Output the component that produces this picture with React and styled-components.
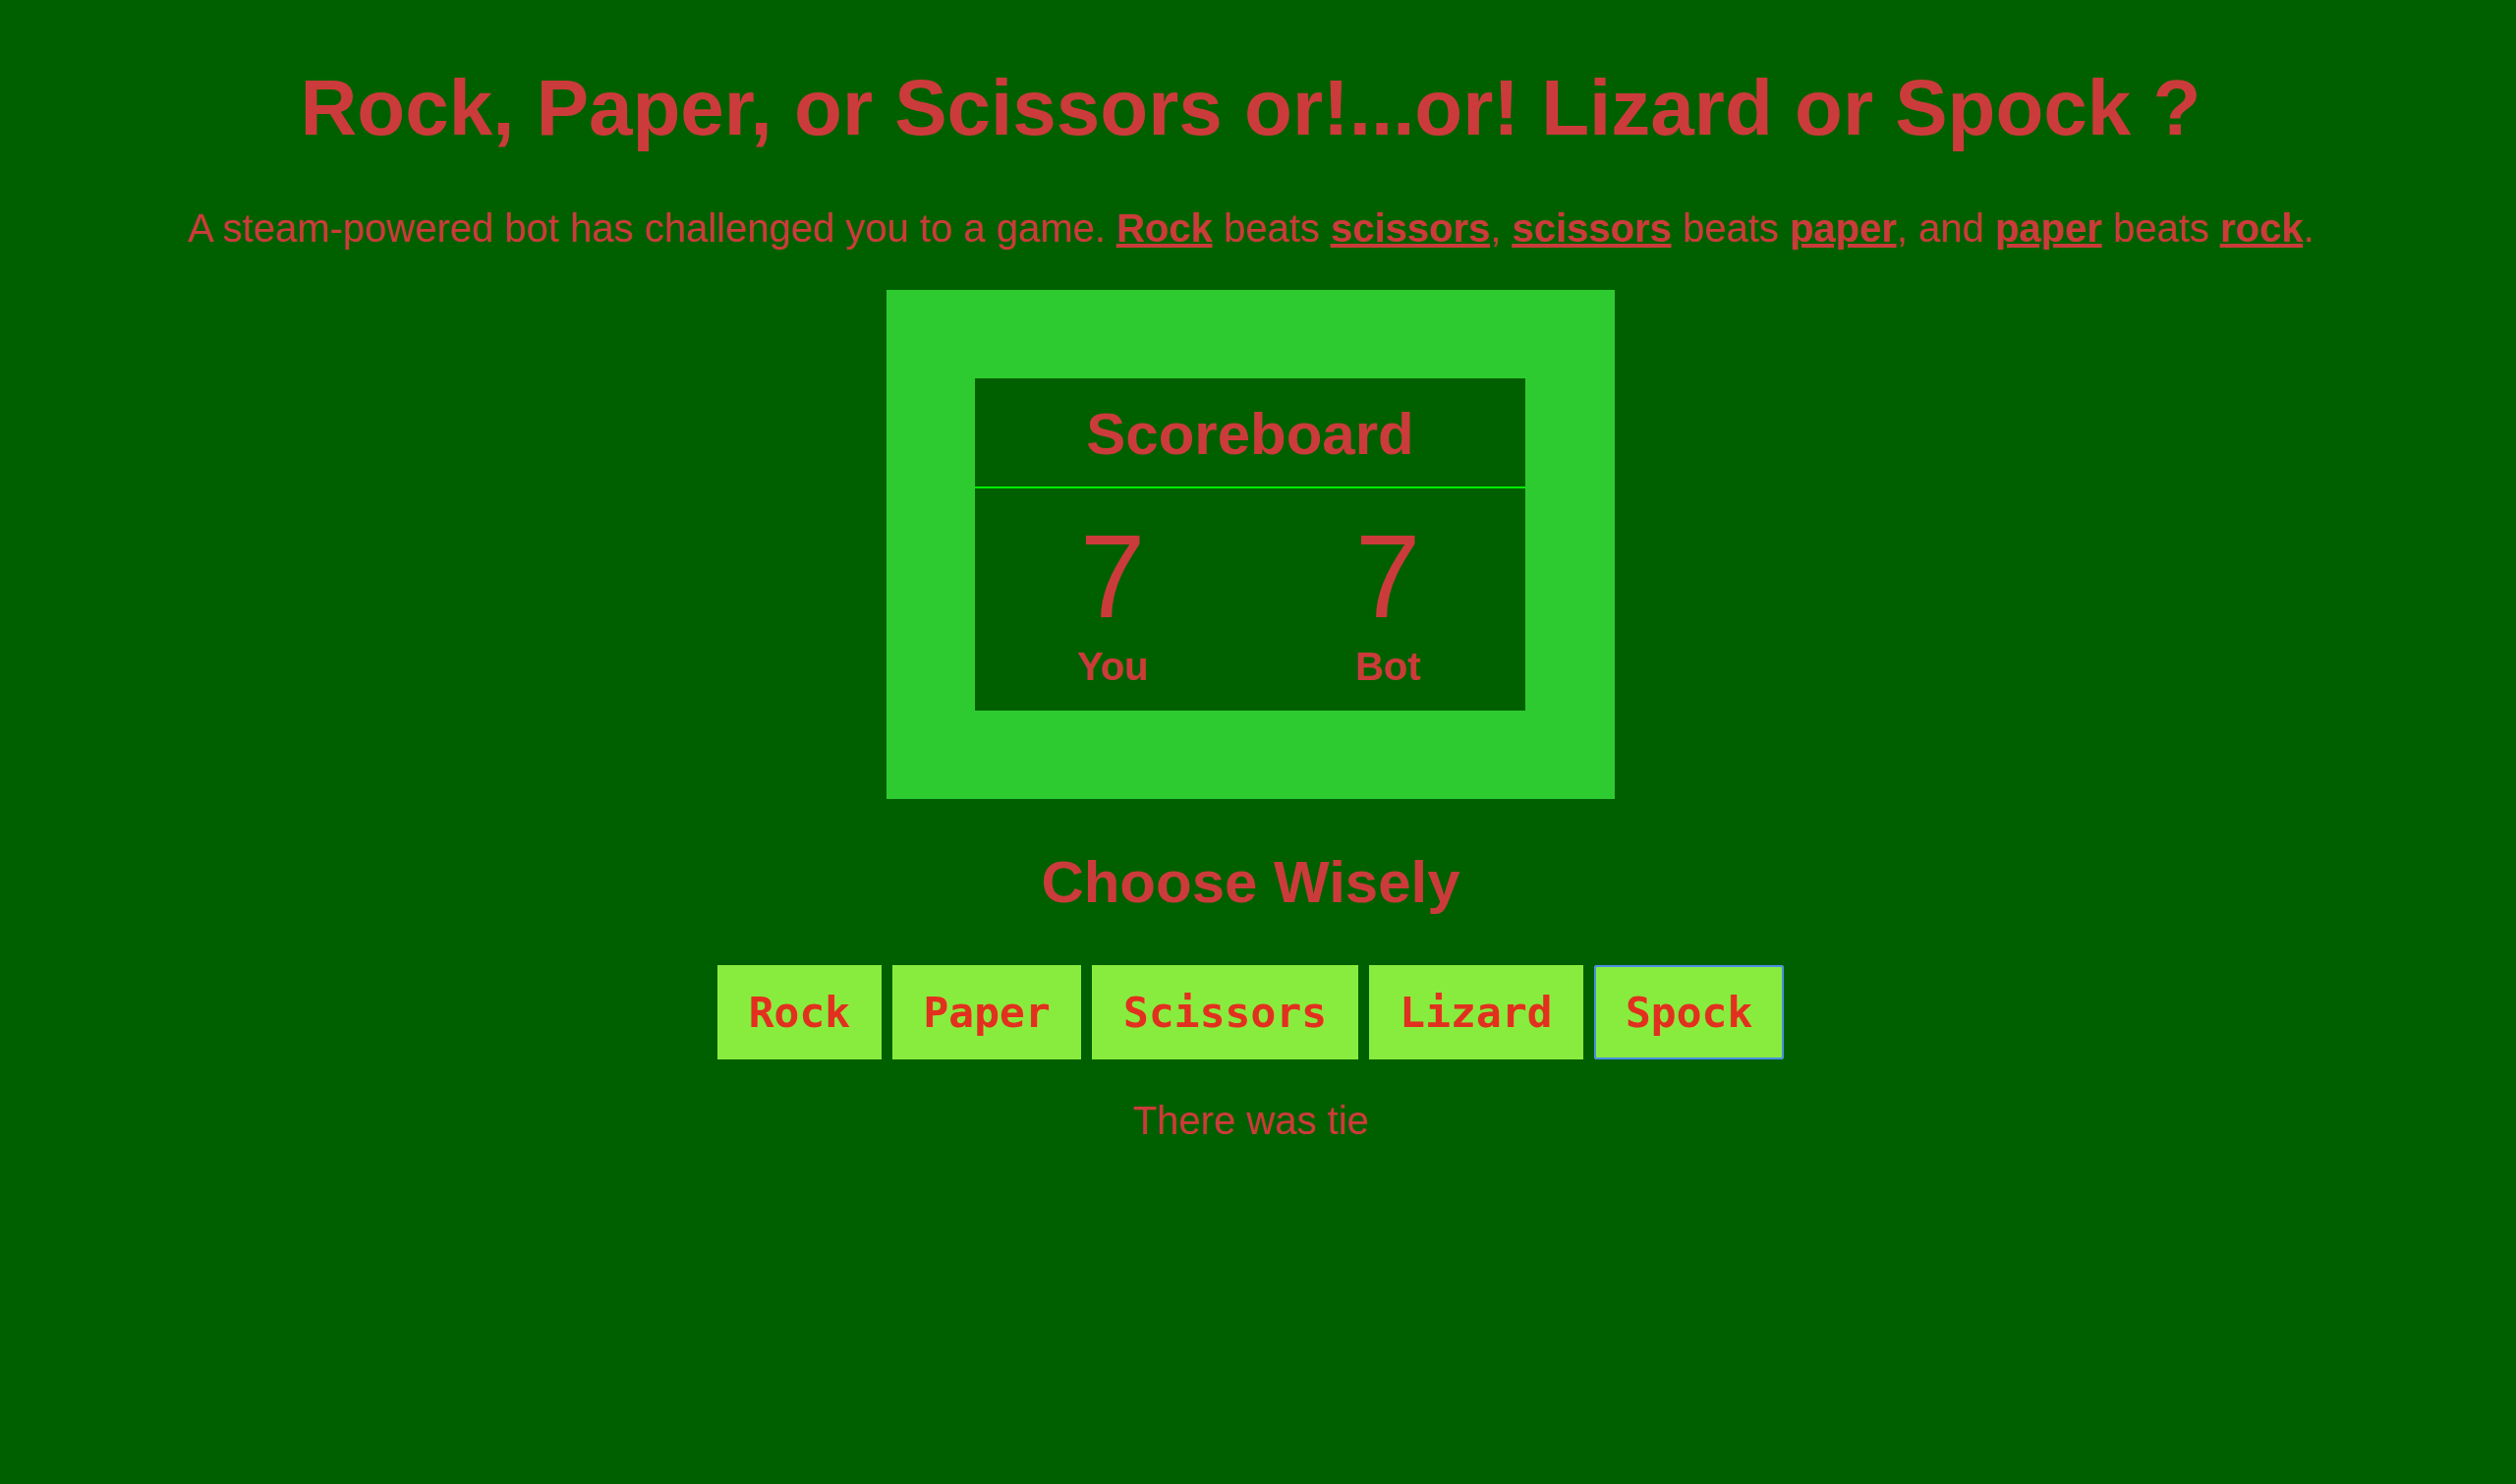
import React, { useState } from 'react';
import styled, { createGlobalStyle } from 'styled-components';

const RED = '#cc3b3b';
const BTN_RED = '#e2301f';

const GlobalStyle = createGlobalStyle`
  html, body {
    margin: 0;
    padding: 0;
    background: #006000;
  }
  body {
    font-family: "Liberation Sans", Arial, sans-serif;
    color: ${RED};
  }
`;

const Page = styled.div`
  min-height: 1510px;
  box-sizing: border-box;
  padding: 64px 15px 0 0;
  text-align: center;
`;

const Title = styled.h1`
  margin: 0 0 54px;
  font-size: 80px;
  font-weight: bold;
`;

const Intro = styled.p`
  margin: 0 0 40px;
  font-size: 40px;
`;

const Term = styled.strong`
  text-decoration: underline;
`;

const Board = styled.div`
  width: 560px;
  margin: 0 auto;
  padding: 90px 91px 90px 90px;
  background: #2ecb30;
`;

const Panel = styled.div`
  background: #006000;
  padding-bottom: 22px;
`;

const PanelHead = styled.div`
  padding: 22px 0 19px;
  font-size: 60px;
  font-weight: bold;
  line-height: 69px;
  border-bottom: 2px solid #00f000;
`;

const Scores = styled.div`
  display: grid;
  grid-template-columns: 1fr 1fr;
  padding-top: 20px;
`;

const ScoreCol = styled.div`
  display: flex;
  flex-direction: column;
  align-items: center;
`;

const Number = styled.span`
  font-size: 120px;
  line-height: 138px;
`;

const Who = styled.span`
  font-size: 40px;
  font-weight: bold;
  line-height: 46px;
`;

const Subtitle = styled.h2`
  margin: 50px 0;
  font-size: 60px;
  font-weight: bold;
`;

const Choices = styled.div`
  display: flex;
  justify-content: center;
  gap: 11px;
`;

const Choice = styled.button`
  height: 96px;
  padding: 0 31.6px;
  border: none;
  border-radius: ${p => (p.$focused ? '3px' : '0')};
  background: #88ec3e;
  color: ${BTN_RED};
  font-family: "DejaVu Sans Mono", "Liberation Mono", monospace;
  font-size: 43px;
  font-weight: bold;
  cursor: pointer;
  outline: ${p => (p.$focused ? '2px solid #4a8ee6' : 'none')};
  outline-offset: -2px;
`;

const Result = styled.p`
  margin: 40px 0 0;
  font-size: 40px;
`;

const OPTIONS = ['Rock', 'Paper', 'Scissors', 'Lizard', 'Spock'];

export default function App() {
  const [picked, setPicked] = useState('Spock');
  return (
    <Page>
      <GlobalStyle />
      <Title>Rock, Paper, or Scissors or!...or! Lizard or Spock ?</Title>
      <Intro>
        A steam-powered bot has challenged you to a game. <Term>Rock</Term> beats{' '}
        <Term>scissors</Term>, <Term>scissors</Term> beats <Term>paper</Term>, and{' '}
        <Term>paper</Term> beats <Term>rock</Term>.
      </Intro>
      <Board>
        <Panel>
          <PanelHead>Scoreboard</PanelHead>
          <Scores>
            <ScoreCol>
              <Number>7</Number>
              <Who>You</Who>
            </ScoreCol>
            <ScoreCol>
              <Number>7</Number>
              <Who>Bot</Who>
            </ScoreCol>
          </Scores>
        </Panel>
      </Board>
      <Subtitle>Choose Wisely</Subtitle>
      <Choices>
        {OPTIONS.map(o => (
          <Choice key={o} $focused={picked === o} onClick={() => setPicked(o)}>
            {o}
          </Choice>
        ))}
      </Choices>
      <Result>There was tie</Result>
    </Page>
  );
}
